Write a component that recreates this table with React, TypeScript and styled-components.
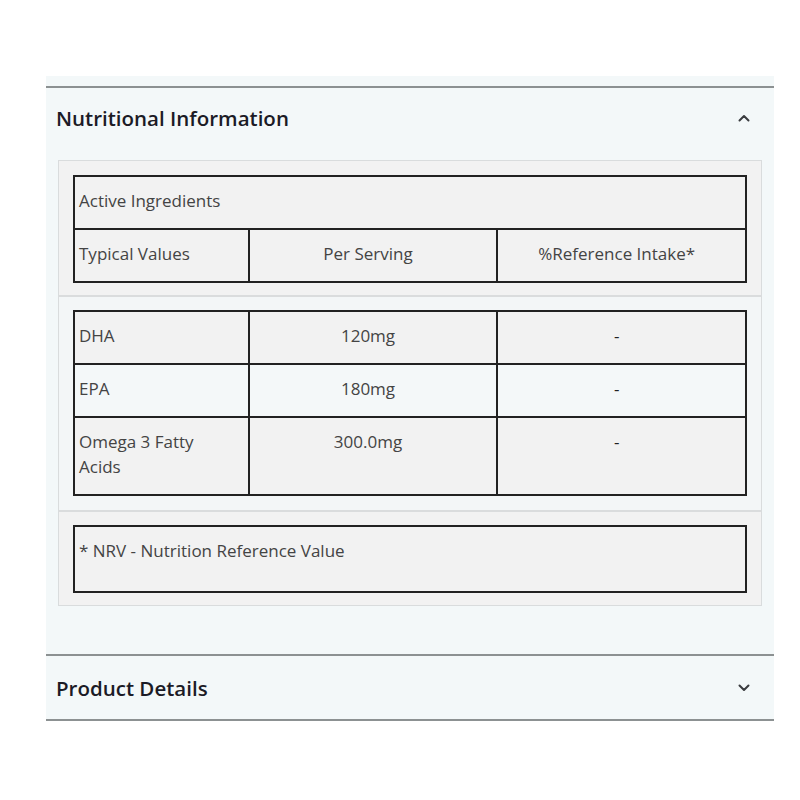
import React from "react";
import styled, { createGlobalStyle } from "styled-components";

const GlobalStyle = createGlobalStyle`
  body {
    margin: 0;
    background: #ffffff;
    font-family: "Open Sans", "Noto Sans", Arial, sans-serif;
  }
`;

const Page = styled.div`
  padding: 76px 26px 0 46px;
  width: 728px;
`;

const Accordion = styled.div`
  background: #f3f8f9;
  padding-top: 10px;
  border-bottom: 2px solid #8c9192;
`;

const Item = styled.section`
  border-top: 2px solid #8c9192;
`;

const Header = styled.div<{ $open?: boolean }>`
  height: 63px;
  display: flex;
  align-items: center;
  justify-content: space-between;
  padding: 0 24px ${(p) => (p.$open ? "3px" : "0")} 10px;
  box-sizing: border-box;
`;

const Title = styled.h2`
  margin: 0;
  font-size: 20.5px;
  font-weight: 600;
  color: #1b1b26;
`;

const Body = styled.div`
  padding: 9px 12px 48px 12px;
`;

const Box = styled.div`
  border: 1px solid #d9dcdd;
  background: #f2f2f2;
`;

const Section = styled.div<{ $tint?: boolean; $last?: boolean; $first?: boolean }>`
  padding: ${(p) => (p.$first ? "14px" : "13px")} 14px ${(p) => (p.$tint ? "14px" : "12px")} 14px;
  background: ${(p) => (p.$tint ? "#f3f6f7" : "#f2f2f2")};
  border-bottom: ${(p) => (p.$last ? "none" : "2px solid #dadcdd")};
`;

const Table = styled.table`
  width: 100%;
  border-collapse: collapse;
  border: 2px solid #222;
  table-layout: fixed;
  font-size: 17px;
  color: #444;
`;

const Row = styled.tr<{ $light?: boolean }>`
  background: ${(p) => (p.$light ? "#f4f8f9" : "#f2f2f2")};
`;

const Cell = styled.td<{ $center?: boolean; $tall?: boolean }>`
  border: 2px solid #222;
  padding: ${(p) => (p.$tall ? "11px 14px 28px 4px" : "11px 14px 15px 4px")};
  line-height: 25px;
  vertical-align: top;
  text-align: ${(p) => (p.$center ? "center" : "left")};
`;

const Dash = styled.span`
  color: #222;
`;

const Chevron = ({ up }: { up?: boolean }) => (
  <svg width="12" height="8" viewBox="0 0 12 8" fill="none">
    <path
      d={up ? "M1.5 6.5 L6 2 L10.5 6.5" : "M1.5 1.5 L6 6 L10.5 1.5"}
      stroke="#3a3d40"
      strokeWidth="2"
      strokeLinecap="round"
      strokeLinejoin="round"
    />
  </svg>
);

const rows = [
  { name: "DHA", serving: "120mg" },
  { name: "EPA", serving: "180mg" },
  { name: "Omega 3 Fatty Acids", serving: "300.0mg" },
];

const Cols = () => (
  <colgroup>
    <col style={{ width: "26%" }} />
    <col style={{ width: "37%" }} />
    <col style={{ width: "37%" }} />
  </colgroup>
);

export default function App() {
  return (
    <Page>
      <GlobalStyle />
      <Accordion>
        <Item>
          <Header $open>
            <Title>Nutritional Information</Title>
            <Chevron up />
          </Header>
          <Body>
            <Box>
              <Section $first>
                <Table>
                  <Cols />
                  <tbody>
                    <Row>
                      <Cell colSpan={3}>Active Ingredients</Cell>
                    </Row>
                    <Row>
                      <Cell>Typical Values</Cell>
                      <Cell $center>Per Serving</Cell>
                      <Cell $center>%Reference Intake*</Cell>
                    </Row>
                  </tbody>
                </Table>
              </Section>
              <Section $tint>
                <Table>
                  <Cols />
                  <tbody>
                    {rows.map((r, i) => (
                      <Row key={r.name} $light={i % 2 === 1}>
                        <Cell>{r.name}</Cell>
                        <Cell $center>{r.serving}</Cell>
                        <Cell $center>
                          <Dash>-</Dash>
                        </Cell>
                      </Row>
                    ))}
                  </tbody>
                </Table>
              </Section>
              <Section $last>
                <Table>
                  <tbody>
                    <Row>
                      <Cell $tall>* NRV - Nutrition Reference Value</Cell>
                    </Row>
                  </tbody>
                </Table>
              </Section>
            </Box>
          </Body>
        </Item>
        <Item>
          <Header>
            <Title>Product Details</Title>
            <Chevron />
          </Header>
        </Item>
      </Accordion>
    </Page>
  );
}
